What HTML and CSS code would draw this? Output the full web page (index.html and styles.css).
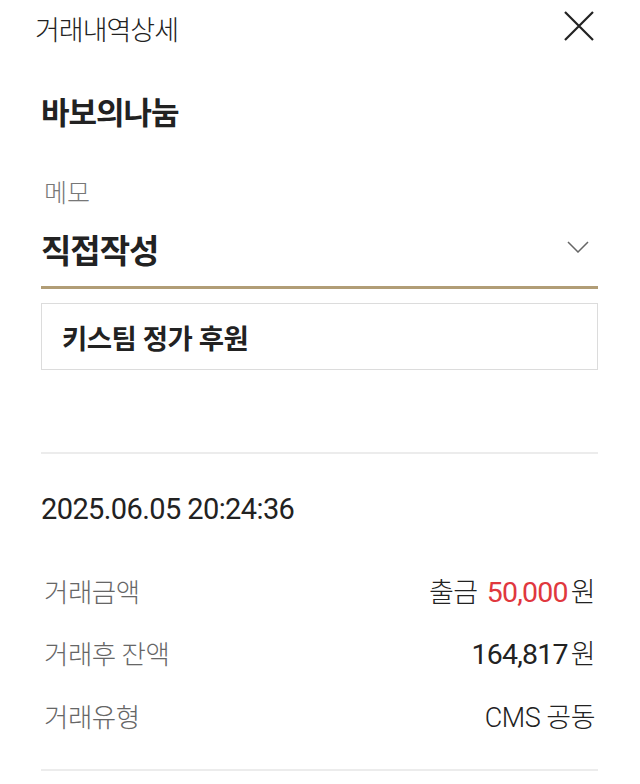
FILE: index.html
```html
<!DOCTYPE html>
<html lang="ko">
<head>
    <meta charset="UTF-8">
    <meta name="viewport" content="width=device-width, initial-scale=1.0">
    <title>거래내역상세</title>
    <link rel="stylesheet" href="styles.css">
</head>
<body>
    <div class="header">
        <h1 class="title">거래내역상세</h1>
        <svg class="close" width="30" height="30" viewBox="0 0 30 30">
            <path d="M1 1 L29 29 M29 1 L1 29" stroke="#222" stroke-width="2.2" fill="none"/>
        </svg>
    </div>

    <div class="content">
        <h2 class="name">바보의나눔</h2>

        <div class="memo-label">메모</div>
        <div class="memo-select">
            <span>직접작성</span>
            <svg class="chevron" width="22" height="12" viewBox="0 0 22 12">
                <path d="M1 1 L11 11 L21 1" stroke="#666" stroke-width="1.5" fill="none"/>
            </svg>
        </div>
        <div class="memo-box">키스팀 정가 후원</div>

        <hr class="divider top">

        <div class="date">2025.06.05 20:24:36</div>

        <div class="rows">
            <div class="row">
                <span class="label">거래금액</span>
                <span class="value">출금 <em class="out">50,000</em>원</span>
            </div>
            <div class="row">
                <span class="label">거래후 잔액</span>
                <span class="value"><span class="num">164,817</span>원</span>
            </div>
            <div class="row">
                <span class="label">거래유형</span>
                <span class="value">CMS 공동</span>
            </div>
        </div>

        <hr class="divider bottom">
    </div>
</body>
</html>
```

FILE: styles.css
```css
body {
    margin: 0;
    background: #fff;
    color: #222;
    font-family: Roboto, "Noto Sans CJK KR", sans-serif;
}
.header {
    display: flex;
    justify-content: space-between;
    align-items: center;
    padding: 6px 46px 0 35px;
    height: 44px;
}
.title {
    margin: 0;
    font-size: 27px;
    font-weight: 300;
    letter-spacing: -1px;
    color: #222;
}
.close {
    margin-top: -4px;
}
.content {
    padding: 0 42px 0 41px;
}
.name {
    margin: 44px 0 0;
    font-size: 31px;
    font-weight: 700;
    letter-spacing: -1px;
    line-height: 40px;
}
.memo-label {
    margin: 43px 0 0 3px;
    font-size: 25px;
    font-weight: 300;
    color: #777;
    line-height: 34px;
}
.memo-select {
    display: flex;
    justify-content: space-between;
    align-items: center;
    height: 75px;
    border-bottom: 3px solid #b19d76;
}
.memo-select span {
    font-size: 33px;
    font-weight: 700;
    letter-spacing: -1px;
    margin-top: 1px;
}
.chevron {
    margin: -4px 9px 0 0;
}
.memo-box {
    margin-top: 14px;
    height: 65px;
    border: 1px solid #dcdcdc;
    padding: 0 20px;
    display: flex;
    align-items: center;
    font-size: 27.5px;
    font-weight: 700;
    letter-spacing: -0.5px;
}
.divider {
    border: none;
    border-top: 2px solid #ececec;
    margin: 0;
}
.divider.top {
    margin-top: 82px;
}
.date {
    margin-top: 37px;
    font-size: 29px;
    font-weight: 400;
    letter-spacing: -0.6px;
    line-height: 36px;
}
.rows {
    margin-top: 32px;
}
.row {
    display: flex;
    justify-content: space-between;
    align-items: center;
    height: 62.5px;
    padding: 0 3px 0 3px;
}
.label {
    font-size: 26.5px;
    font-weight: 300;
    color: #666;
    letter-spacing: -0.5px;
}
.value {
    font-size: 27px;
    font-weight: 300;
    letter-spacing: -0.5px;
}
.value em {
    font-style: normal;
}
.out, .num {
    font-size: 28.5px;
    font-weight: 400;
    letter-spacing: -0.8px;
    margin-right: 3px;
}
.out {
    color: #e0383e;
    margin-left: 3px;
}
.divider.bottom {
    margin-top: 22px;
}
```
